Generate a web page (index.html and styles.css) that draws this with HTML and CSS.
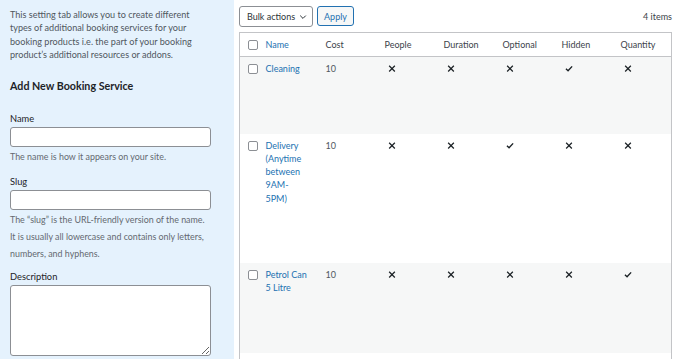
FILE: index.html
```html
<!DOCTYPE html>
<html lang="en">
<head>
<meta charset="utf-8">
<title>Booking Services</title>
<link rel="stylesheet" href="styles.css">
</head>
<body>
<svg class="defs" width="0" height="0" aria-hidden="true">
  <symbol id="i-no" viewBox="0 0 14 14"><path d="M4 4 L10 10 M10 4 L4 10" fill="none" stroke="#1d2327" stroke-width="1.3"/></symbol>
  <symbol id="i-yes" viewBox="0 0 14 14"><path d="M3.8 7.2 L6 9.3 L10.3 4.6" fill="none" stroke="#1d2327" stroke-width="1.5"/></symbol>
</svg>
<div class="page">
  <aside class="col-left">
    <p class="intro">This setting tab allows you to create different types of additional booking services for your booking products i.e. the part of your booking product’s additional resources or addons.</p>
    <h2 class="form-title">Add New Booking Service</h2>
    <div class="field">
      <label class="label" for="tag-name">Name</label>
      <input class="input" id="tag-name" type="text">
      <p class="desc">The name is how it appears on your site.</p>
    </div>
    <div class="field field-slug">
      <label class="label" for="tag-slug">Slug</label>
      <input class="input" id="tag-slug" type="text">
      <p class="desc desc-tall">The “slug” is the URL-friendly version of the name. It is usually all lowercase and contains only letters, numbers, and hyphens.</p>
    </div>
    <div class="field">
      <label class="label" for="tag-desc">Description</label>
      <textarea class="textarea" id="tag-desc"></textarea>
    </div>
  </aside>
  <main class="col-right">
    <div class="tablenav">
      <button class="bulk" type="button">Bulk actions
        <svg class="chev" width="8" height="8" viewBox="0 0 8 8"><path d="M1.2 2.6 L4 5.4 L6.8 2.6" fill="none" stroke="#2c3338" stroke-width="1"/></svg>
      </button>
      <button class="apply" type="button">Apply</button>
      <span class="count">4 items</span>
    </div>
    <table class="list">
      <colgroup>
        <col class="c-check"><col class="c-name"><col class="c-std"><col class="c-std"><col class="c-std"><col class="c-std"><col class="c-std"><col class="c-std">
      </colgroup>
      <thead>
        <tr>
          <th class="check"><span class="cb"></span></th>
          <th><a class="link">Name</a></th>
          <th>Cost</th>
          <th>People</th>
          <th>Duration</th>
          <th>Optional</th>
          <th>Hidden</th>
          <th>Quantity</th>
        </tr>
      </thead>
      <tbody>
        <tr class="alt row-1">
          <td class="check"><span class="cb"></span></td>
          <td class="name"><a class="link">Cleaning</a></td>
          <td class="num">10</td>
          <td><svg class="ic"><use href="#i-no"/></svg></td>
          <td><svg class="ic"><use href="#i-no"/></svg></td>
          <td><svg class="ic"><use href="#i-no"/></svg></td>
          <td><svg class="ic"><use href="#i-yes"/></svg></td>
          <td><svg class="ic"><use href="#i-no"/></svg></td>
        </tr>
        <tr class="row-2">
          <td class="check"><span class="cb"></span></td>
          <td class="name"><a class="link">Delivery (Anytime between 9AM-5PM)</a></td>
          <td class="num">10</td>
          <td><svg class="ic"><use href="#i-no"/></svg></td>
          <td><svg class="ic"><use href="#i-no"/></svg></td>
          <td><svg class="ic"><use href="#i-yes"/></svg></td>
          <td><svg class="ic"><use href="#i-no"/></svg></td>
          <td><svg class="ic"><use href="#i-no"/></svg></td>
        </tr>
        <tr class="alt row-3">
          <td class="check"><span class="cb"></span></td>
          <td class="name"><a class="link">Petrol Can 5 Litre</a></td>
          <td class="num">10</td>
          <td><svg class="ic"><use href="#i-no"/></svg></td>
          <td><svg class="ic"><use href="#i-no"/></svg></td>
          <td><svg class="ic"><use href="#i-no"/></svg></td>
          <td><svg class="ic"><use href="#i-no"/></svg></td>
          <td><svg class="ic"><use href="#i-yes"/></svg></td>
        </tr>
        <tr class="row-4">
          <td class="check"></td>
          <td></td><td></td><td></td><td></td><td></td><td></td><td></td>
        </tr>
      </tbody>
    </table>
  </main>
</div>
</body>
</html>
```

FILE: styles.css
```css
* { box-sizing: border-box; }

html, body {
  margin: 0;
  padding: 0;
  background: #ffffff;
}

body {
  font-family: "Lato", "Noto Sans", sans-serif;
  color: #3c434a;
  width: 680px;
  height: 359px;
  overflow: hidden;
}

.defs { position: absolute; width: 0; height: 0; }

.page {
  display: flex;
  height: 359px;
}

/* ---------- left column ---------- */
.col-left {
  width: 234px;
  flex: none;
  background: #e5f2fd;
  padding: 8px 26px 0 10px;
}

.intro {
  margin: 0;
  font-size: 9.1px;
  line-height: 13.3px;
  color: #50575e;
}

.form-title {
  margin: 17px 0 0 0;
  font-size: 10.7px;
  line-height: 15px;
  font-weight: 700;
  color: #1d2327;
}

.field { display: flex; flex-direction: column; }

.form-title + .field { margin-top: 19px; }

.field-slug { padding-top: 1px; }

.label {
  font-size: 9.3px;
  line-height: 13px;
  color: #1d2327;
  margin-bottom: 2px;
}

.input {
  width: 201px;
  height: 20px;
  border: 1px solid #8c8f94;
  border-radius: 3px;
  background: #fff;
  margin: 0;
  padding: 0 5px;
}

.desc {
  margin: 3px 0 11px 0;
  font-size: 8.9px;
  line-height: 13px;
  color: #646970;
  width: 200px;
}

.desc-tall {
  line-height: 17px;
  margin-top: 1px;
  margin-bottom: 7.5px;
}

.textarea {
  width: 201px;
  height: 71px;
  border: 1px solid #8c8f94;
  border-radius: 3px;
  background: #fff;
  resize: vertical;
  margin: 0;
}

/* ---------- right column ---------- */
.col-right {
  flex: 1;
  padding: 6px 8px 0 5px;
}

.tablenav {
  display: flex;
  align-items: center;
  gap: 4px;
  height: 21px;
  margin-bottom: 5px;
}

.bulk {
  display: flex;
  align-items: center;
  justify-content: space-between;
  width: 74px;
  height: 21px;
  padding: 0 5px 0 7px;
  border: 1px solid #8c8f94;
  border-radius: 3px;
  background: #fff;
  font-family: inherit;
  font-size: 9px;
  color: #2c3338;
}

.apply {
  width: 37px;
  height: 20px;
  padding: 0;
  border: 1px solid #2271b1;
  border-radius: 3px;
  background: #f6f7f7;
  color: #2271b1;
  font-family: inherit;
  font-size: 9px;
  align-self: flex-start;
}

.count {
  margin-left: auto;
  font-size: 9px;
  color: #3c434a;
}

.list {
  width: 433px;
  border: 1px solid #c3c4c7;
  border-collapse: collapse;
  table-layout: fixed;
}

.c-check { width: 18px; }
.c-name { width: 60px; }
.c-std { width: 59px; }

.list th {
  height: 24px;
  padding: 0 0 0 8px;
  text-align: left;
  font-weight: 400;
  font-size: 9px;
  color: #3c434a;
  border-bottom: 1px solid #c3c4c7;
  vertical-align: middle;
}

.list td {
  padding: 5px 0 0 8px;
  vertical-align: top;
  font-size: 9px;
  line-height: 13.3px;
}

.list td.name { padding-right: 10px; }

.list th.check, .list td.check { padding-left: 8px; padding-right: 0; }

.list td.check { padding-top: 7px; }

.cb {
  display: block;
  width: 10px;
  height: 10px;
  border: 1px solid #8c8f94;
  border-radius: 2px;
  background: #fff;
}

.link {
  color: #2271b1;
  text-decoration: none;
}

.num {
  color: #50575e;
  font-size: 8.5px;
}

.ic {
  display: block;
  width: 14px;
  height: 13.3px;
}

.alt { background: #f6f7f7; }

.row-1 { height: 77px; }
.row-2 { height: 129px; }
.row-3 { height: 90px; }
.row-4 { height: 40px; }
```
